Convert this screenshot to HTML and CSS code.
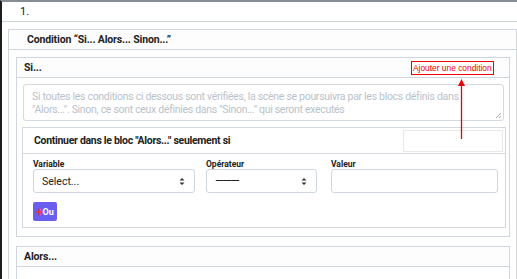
FILE: index.html
```html
<!DOCTYPE html>
<html lang="fr">
<head>
<meta charset="utf-8">
<link rel="stylesheet" href="styles.css">
</head>
<body>
<div class="page">
  <div class="step-row">1.</div>
  <div class="card outer">
    <div class="card-head">Condition “Si... Alors... Sinon...”</div>
    <div class="outer-body">
      <div class="card si">
        <div class="card-head small">Si...</div>
        <div class="si-body">
          <div class="textarea">Si toutes les conditions ci dessous sont vérifiées, la scène se poursuivra par les blocs définis dans "Alors...". Sinon, ce sont ceux définies dans "Sinon..." qui seront executés<span class="grip"></span></div>
          <div class="card sub">
            <div class="sub-head">
              <span>Continuer dans le bloc "Alors..." seulement si</span>
              <div class="mini-input"></div>
            </div>
            <div class="sub-body">
              <div class="fields">
                <div class="field f-var">
                  <div class="label">Variable</div>
                  <div class="select"><span>Select...</span><svg width="6" height="9" viewBox="0 0 6 9"><path d="M0.5 3.5 L3 1 L5.5 3.5 Z M0.5 5.5 L3 8 L5.5 5.5 Z" fill="#333"/></svg></div>
                </div>
                <div class="field f-op">
                  <div class="label">Opérateur</div>
                  <div class="select"><span class="dash">———</span><svg width="6" height="9" viewBox="0 0 6 9"><path d="M0.5 3.5 L3 1 L5.5 3.5 Z M0.5 5.5 L3 8 L5.5 5.5 Z" fill="#333"/></svg></div>
                </div>
                <div class="field f-val">
                  <div class="label">Valeur</div>
                  <div class="input"></div>
                </div>
              </div>
              <div class="btn"><span class="plus">+</span>Ou</div>
            </div>
          </div>
        </div>
      </div>
      <div class="card alors">
        <div class="card-head small">Alors...</div>
        <div class="alors-body"></div>
      </div>
    </div>
  </div>
  <div class="annot">Ajouter une condition</div>
  <div class="arrow"><svg width="9" height="60" viewBox="0 0 9 60"><path d="M4.5 0 L8 7 L1 7 Z" fill="#e00"/><line x1="4.5" y1="6" x2="4.5" y2="60" stroke="#e00" stroke-width="1.3"/></svg></div>
</div>
</body>
</html>
```

FILE: styles.css
```css
html, body { margin: 0; padding: 0; background: #fff; }
body {
  font-family: Roboto, "Noto Sans", sans-serif;
  color: #222;
}
.page {
  position: relative;
  width: 515px;
  height: 277px;
  border-left: 2px solid #1e1e1e;
  border-top: 2px solid #858e96;
  overflow: hidden;
}
.step-row {
  height: 19px;
  line-height: 19px;
  padding-left: 18px;
  font-size: 11px;
  border-bottom: 1px solid #cdd4db;
}
.card {
  border: 1px solid #cfd6dd;
  background: #fff;
}
.outer {
  margin: 7px 0 0 6px;
  width: 507px;
}
.card-head {
  height: 19px;
  line-height: 20px;
  padding-left: 18px;
  font-size: 10.5px;
  font-weight: 700;
  letter-spacing: -0.15px;
  border-bottom: 1px solid #cfd6dd;
  background: #fdfdfd;
}
.card-head.small { padding-left: 7px; }
.outer-body {
  padding: 7px 6px 0 7px;
  display: flex;
  flex-direction: column;
  gap: 9px;
}
.si-body {
  padding: 6px 5px 8px 6px;
}
.textarea {
  position: relative;
  height: 33px;
  border: 1px solid #d3d9df;
  border-radius: 3px;
  padding: 1px 8px 1px 8px;
  font-size: 10.5px;
  letter-spacing: -0.3px;
  line-height: 13px;
  color: #b9c2cb;
  display: flex;
  align-items: center;
}
.grip {
  position: absolute;
  right: 2px;
  bottom: 2px;
  width: 5px;
  height: 5px;
  background: linear-gradient(135deg, transparent 45%, #aaa 45%, #aaa 55%, transparent 55%, transparent 75%, #aaa 75%, #aaa 85%, transparent 85%);
}
.sub {
  margin: 6px -2px 0 -1px;
  border-color: #d3d9df;
}
.sub-head {
  height: 25px;
  border-bottom: 1px solid #d3d9df;
  display: flex;
  align-items: center;
  justify-content: space-between;
  padding: 0 2px 0 11px;
  font-size: 10.5px;
  font-weight: 700;
  letter-spacing: -0.3px;
}
.mini-input {
  width: 98px;
  height: 20px;
  border: 1px solid #e6e8ea;
}
.sub-body {
  padding: 5px 0 6px 10px;
}
.fields {
  display: flex;
}
.field { display: flex; flex-direction: column; flex-shrink: 0; }
.label {
  font-size: 8.5px;
  font-weight: 700;
  height: 10px;
  line-height: 10px;
}
.f-var { width: 162px; margin-right: 11px; }
.f-op { width: 111px; margin-right: 14px; }
.f-val { width: 167px; }
.select, .input {
  height: 22px;
  border: 1px solid #cfd6dd;
  border-radius: 3px;
  background: #fff;
}
.select {
  display: flex;
  align-items: center;
  justify-content: space-between;
  padding: 0 9px 0 8px;
  font-size: 10.5px;
}
.dash { font-size: 12px; letter-spacing: -1.6px; }
.btn {
  margin-top: 9px;
  width: 24px;
  height: 19px;
  background: #6a5ef0;
  border-radius: 2px;
  color: #fff;
  font-size: 9px;
  font-weight: 700;
  display: flex;
  align-items: center;
  justify-content: center;
}
.plus { color: #ff3030; font-size: 12px; font-weight: 900; line-height: 1; }
.alors-body { height: 20px; }
.annot {
  position: absolute;
  left: 409px;
  top: 59px;
  padding: 0 1px;
  height: 12px;
  line-height: 12px;
  border: 1px solid #e00;
  color: #e00;
  font-size: 8.4px;
  font-family: "Liberation Sans", Arial, sans-serif;
  background: #fff;
}
.arrow {
  position: absolute;
  left: 455px;
  top: 77px;
  height: 60px;
}
```
